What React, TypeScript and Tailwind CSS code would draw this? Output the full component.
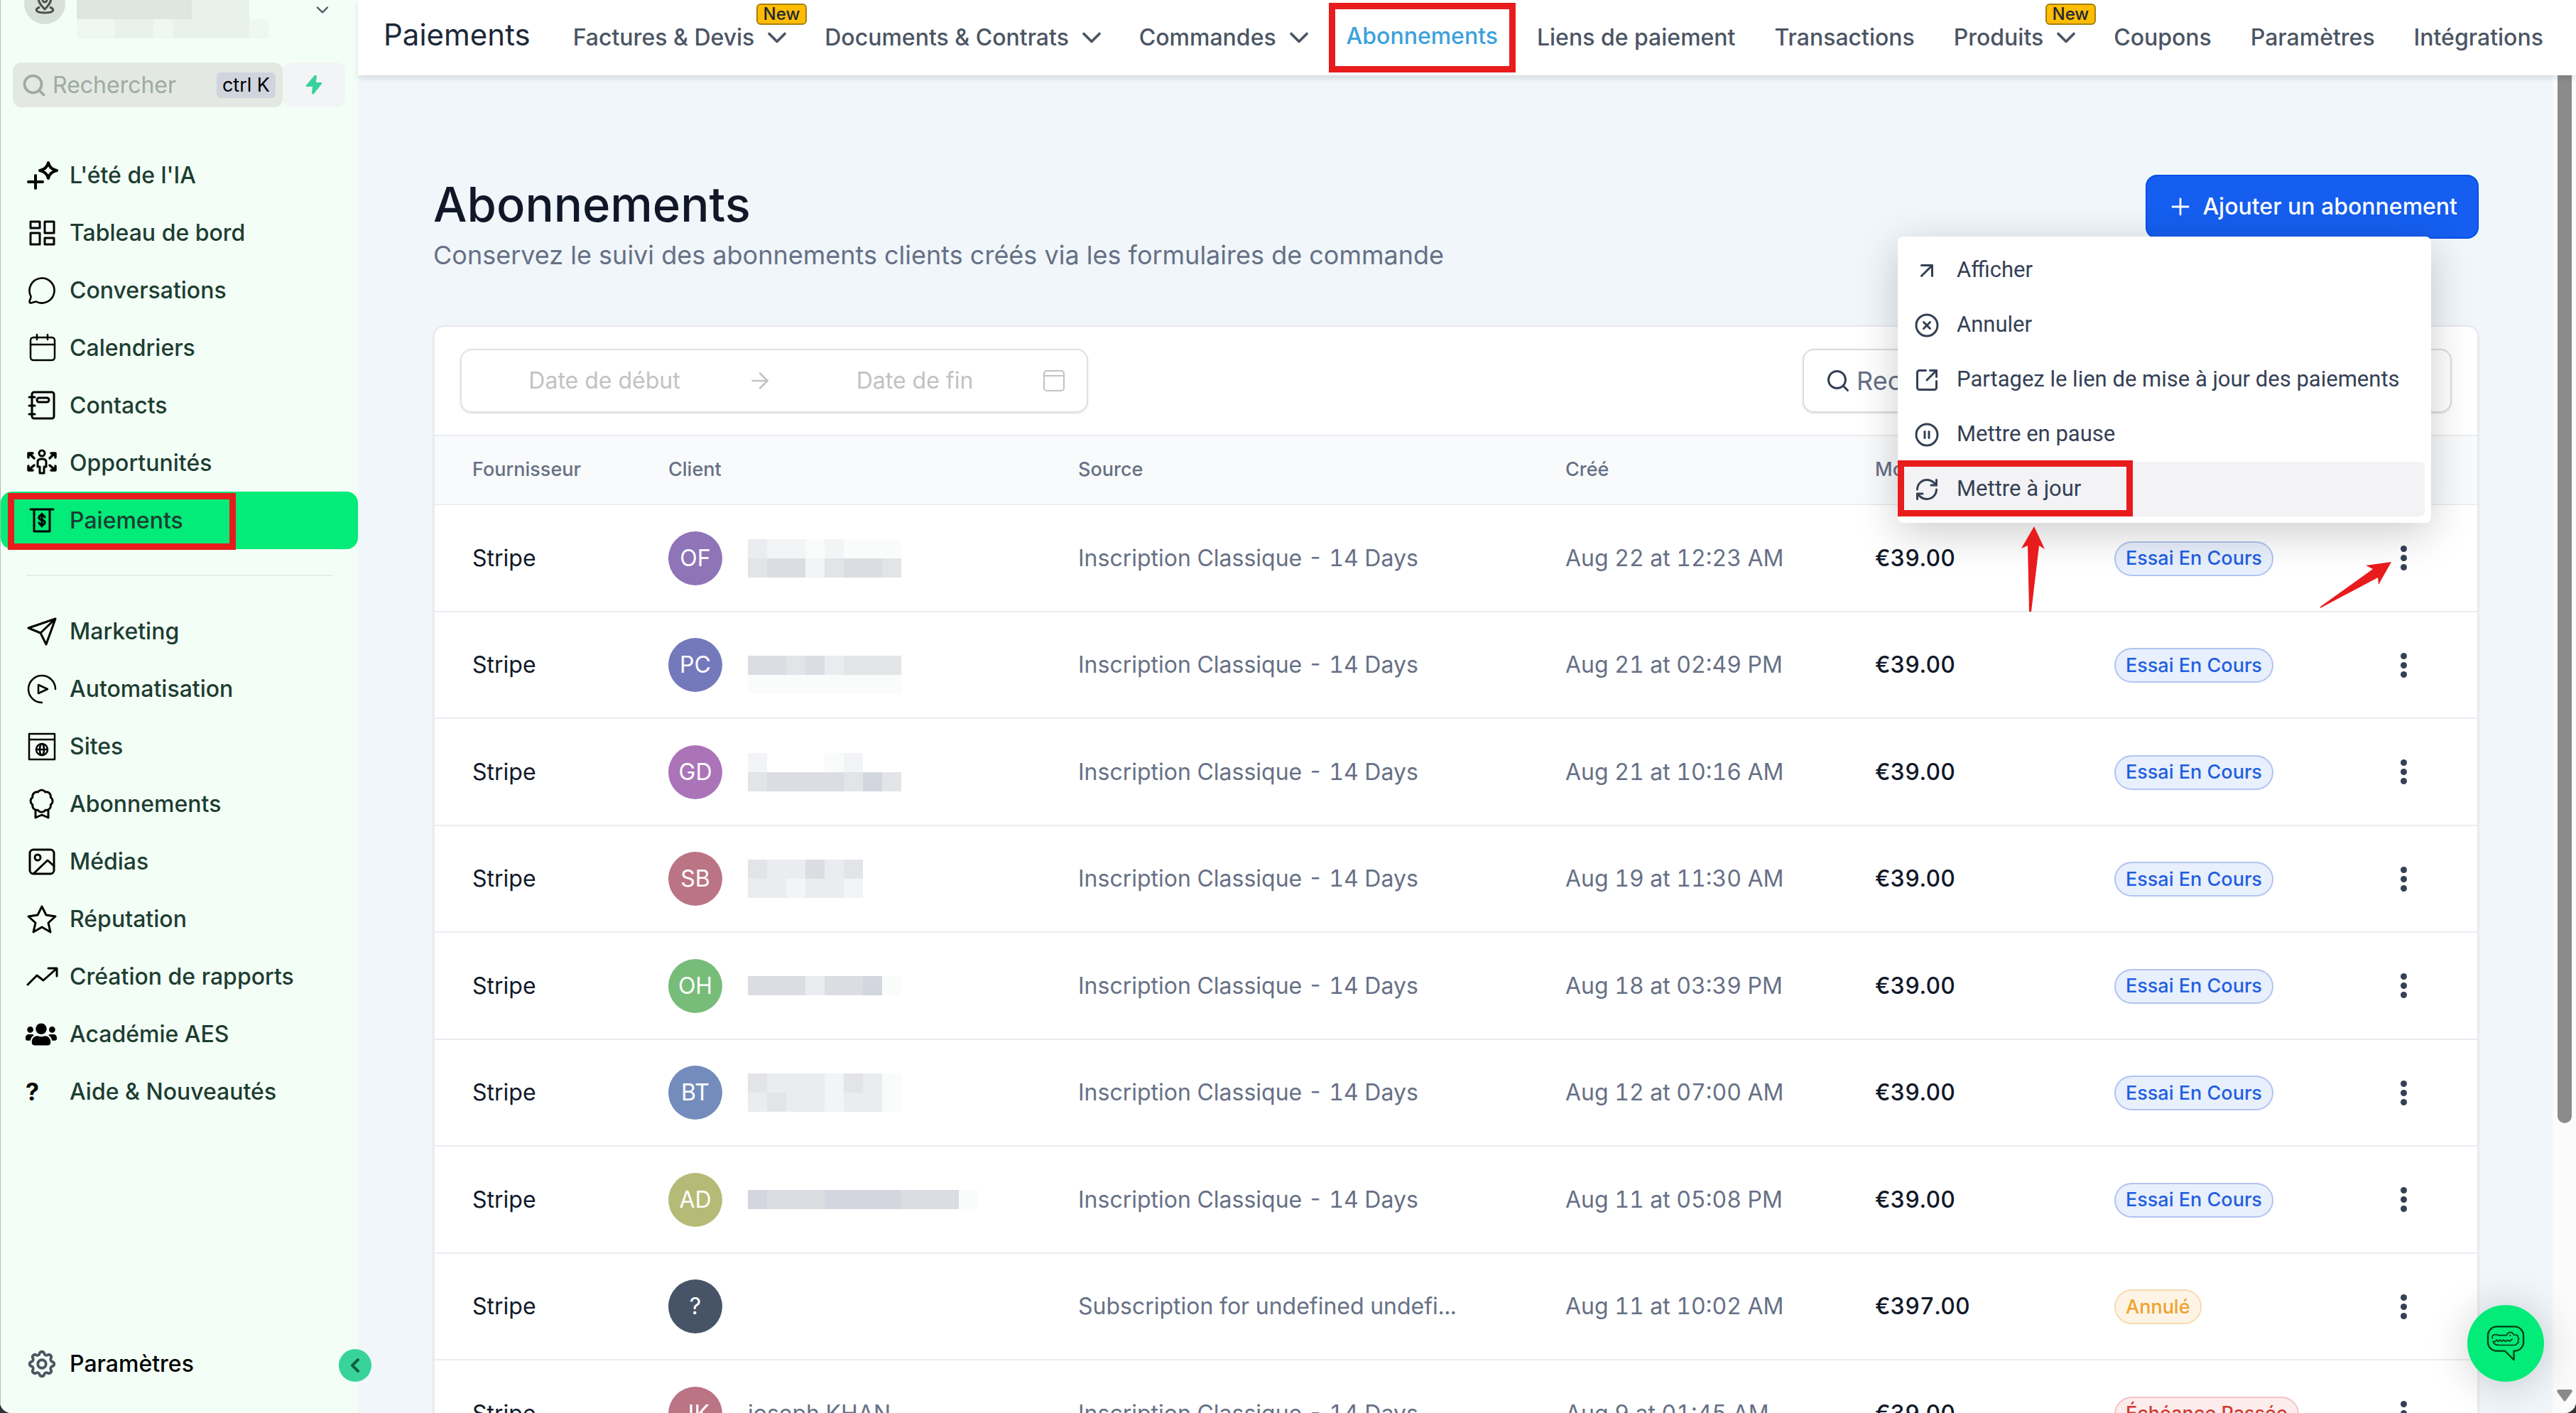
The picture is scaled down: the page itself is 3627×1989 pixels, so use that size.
import type { ReactNode } from 'react';
import {
  ArrowRight,
  ArrowUpRight,
  ChevronDown,
  ChevronLeft,
  CirclePause,
  CircleX,
  MessageCircle,
  Plus,
  RefreshCw,
  Search,
  SquareArrowOutUpRight,
} from 'lucide-react';
import { FaUsers } from 'react-icons/fa';
import { HiOutlineCog } from 'react-icons/hi';

/* ---------- sidebar icons ---------- */

const Glyph = ({ children, w = 3 }: { children: ReactNode; w?: number }) => (
  <svg
    viewBox="0 0 46 46"
    className="h-[46px] w-[46px]"
    fill="none"
    stroke="currentColor"
    strokeWidth={w}
    strokeLinejoin="round"
    strokeLinecap="round"
    aria-hidden="true"
  >
    {children}
  </svg>
);

const icons = {
  sparkle: (
    <Glyph w={4}>
      <path d="M4 32h20M14 23v18" />
      <path d="M32 5q2 9 12 11q-10 2-12 11q-2-9-12-11q10-2 12-11z" />
    </Glyph>
  ),
  dashboard: (
    <Glyph>
      <path d="M7 7h13v9H7zM27 7h13v16H27zM7 23h13v16H7zM27 30h13v9H27z" />
    </Glyph>
  ),
  bubble: <MessageCircle className="mx-[2px] h-[42px] w-[42px]" strokeWidth={1.5} />,
  calendar: (
    <Glyph w={2.5}>
      <rect x="7" y="8" width="34" height="32" rx="4" />
      <path d="M7 18h34M16 4v7M31 4v7" />
    </Glyph>
  ),
  contacts: (
    <Glyph>
      <rect x="9" y="4" width="31" height="37" rx="3" />
      <rect x="16" y="12" width="17" height="6" rx="3" />
      <path d="M5 11h8M5 23h8M5 35h8" />
    </Glyph>
  ),
  opportunities: (
    <Glyph>
      <circle cx="23" cy="9" r="4" />
      <path d="M17 28v-7q0-4 6-4t6 4v7h-3v9h-6v-9z" />
      <path d="M12 16L5 9M4 15V9h6M34 16l7-7M42 15V9h-6M12 26l-7 6M4 27v6h6M34 26l7 6M42 27v6h-6" strokeWidth={3.5} />
    </Glyph>
  ),
  payments: (
    <Glyph>
      <path d="M7 7h32M12 7v31h22V7" />
      <path d="M27 18q-1-3-4-3t-4 3t4 4t4 4t-4 3t-4-3M23 13v18" />
    </Glyph>
  ),
  send: (
    <Glyph>
      <path d="M4 18L42 5L29 41L21 25zM21 25L42 5" />
    </Glyph>
  ),
  play: (
    <Glyph w={2.5}>
      <path d="M42 23A19 19 0 1 0 23 42" />
      <path d="M18 17l13 6l-13 6z" />
    </Glyph>
  ),
  site: (
    <Glyph w={2.5}>
      <path d="M5 5h36v36H5zM5 13h36" />
      <circle cx="23" cy="27" r="8" />
      <ellipse cx="23" cy="27" rx="3" ry="8" />
      <path d="M15 27h16" />
    </Glyph>
  ),
  award: (
    <Glyph>
      <g transform="translate(4 0) scale(1.55)">
        <path
          strokeWidth={1.9}
          d="M3.85 8.62a4 4 0 0 1 4.78-4.77 4 4 0 0 1 6.74 0 4 4 0 0 1 4.78 4.78 4 4 0 0 1 0 6.74 4 4 0 0 1-4.77 4.78 4 4 0 0 1-6.75 0 4 4 0 0 1-4.78-4.77 4 4 0 0 1 0-6.76Z"
        />
      </g>
      <path d="M14 32v10l9-4l9 4V32" />
    </Glyph>
  ),
  media: (
    <Glyph>
      <rect x="6" y="6" width="34" height="34" rx="5" />
      <circle cx="17" cy="17" r="4" />
      <path d="M12 39l19-18l9 8" />
    </Glyph>
  ),
  star: (
    <Glyph>
      <path d="M23 5l6 12l13 2l-10 9l3 13l-12-7l-12 7l3-13l-10-9l13-2z" />
    </Glyph>
  ),
  trend: (
    <Glyph>
      <path d="M3 34l13-13l9 7L43 12M32 11h12v11" />
    </Glyph>
  ),
  users: <FaUsers className="h-11 w-11" />,
  help: <span className="text-[34px] leading-none font-bold">?</span>,
};

type IconName = keyof typeof icons;

const mainLinks: { icon: IconName; label: string }[] = [
  { icon: 'sparkle', label: "L'été de l'IA" },
  { icon: 'dashboard', label: 'Tableau de bord' },
  { icon: 'bubble', label: 'Conversations' },
  { icon: 'calendar', label: 'Calendriers' },
  { icon: 'contacts', label: 'Contacts' },
  { icon: 'opportunities', label: 'Opportunités' },
  { icon: 'payments', label: 'Paiements' },
];

const moreLinks: { icon: IconName; label: string }[] = [
  { icon: 'send', label: 'Marketing' },
  { icon: 'play', label: 'Automatisation' },
  { icon: 'site', label: 'Sites' },
  { icon: 'award', label: 'Abonnements' },
  { icon: 'media', label: 'Médias' },
  { icon: 'star', label: 'Réputation' },
  { icon: 'trend', label: 'Création de rapports' },
  { icon: 'users', label: 'Académie AES' },
  { icon: 'help', label: 'Aide & Nouveautés' },
];

const topLinks: { label: string; menu?: boolean; isNew?: boolean; active?: boolean }[] = [
  { label: 'Factures & Devis', menu: true, isNew: true },
  { label: 'Documents & Contrats', menu: true },
  { label: 'Commandes', menu: true },
  { label: 'Abonnements', active: true },
  { label: 'Liens de paiement' },
  { label: 'Transactions' },
  { label: 'Produits', menu: true, isNew: true },
  { label: 'Coupons' },
  { label: 'Paramètres' },
  { label: 'Intégrations' },
];

/* ---------- table data ---------- */

type Status = 'trial' | 'canceled' | 'pastDue';

interface Row {
  initials: string;
  color: string;
  name?: string;
  tiles?: string[];
  source?: string;
  date: string;
  amount?: string;
  status?: Status;
}

// Masked names: one string per line of tiles, one shade letter per tile
const shades: Record<string, string> = {
  ' ': 'transparent',
  a: '#fafbfb',
  b: '#f3f4f6',
  c: '#ebecef',
  d: '#e3e4e8',
  e: '#dbdde2',
  f: '#d3d6df',
};

const rows: Row[] = [
  { initials: 'OF', color: '#8f74b8', tiles: ['cbbabaaa', 'deebdeed'], date: 'Aug 22 at 12:23 AM' },
  { initials: 'PC', color: '#7479bc', tiles: ['        ', 'eedecddd', 'aaaaaaaa'], date: 'Aug 21 at 02:49 PM' },
  { initials: 'GD', color: '#ab74b9', tiles: ['b   ab  ', 'deeeedfd'], date: 'Aug 21 at 10:16 AM' },
  { initials: 'SB', color: '#bb7484', tiles: ['dccecd  ', 'ccbccb  '], date: 'Aug 19 at 11:30 AM' },
  { initials: 'OH', color: '#77bc79', tiles: ['eeeceefa'], date: 'Aug 18 at 03:39 PM' },
  { initials: 'BT', color: '#748cbb', tiles: ['dcccbdca', 'cdccbcca'], date: 'Aug 12 at 07:00 AM' },
  { initials: 'AD', color: '#b5bb77', tiles: ['feeeffffeeea'], date: 'Aug 11 at 05:08 PM' },
  {
    initials: '?',
    color: '#475467',
    source: 'Subscription for undefined undefi...',
    date: 'Aug 11 at 10:02 AM',
    amount: '€397.00',
    status: 'canceled',
  },
  { initials: 'JK', color: '#bb7484', name: 'joseph KHAN', date: 'Aug 9 at 01:45 AM', status: 'pastDue' },
];

const statusLabel: Record<Status, string> = {
  trial: 'Essai En Cours',
  canceled: 'Annulé',
  pastDue: 'Échéance Passée',
};

const statusClass: Record<Status, string> = {
  trial: 'border-[#b2c4f0] bg-[#e8effd] text-[#1f5fe0]',
  canceled: 'border-[#f7dab0] bg-[#fef4e6] text-[#eda32f]',
  pastDue: 'border-[#f3c3c3] bg-[#fdecec] text-[#d03a30]',
};

const menuItems = [
  { Icon: ArrowUpRight, label: 'Afficher' },
  { Icon: CircleX, label: 'Annuler' },
  { Icon: SquareArrowOutUpRight, label: 'Partagez le lien de mise à jour des paiements' },
  { Icon: CirclePause, label: 'Mettre en pause' },
  { Icon: RefreshCw, label: 'Mettre à jour' },
];

const Tiles = ({ lines, palette }: { lines: string[]; palette: Record<string, string> }) => (
  <div aria-hidden="true">
    {lines.map((line, i) => (
      <div key={i} className="flex">
        {line.split('').map((s, j) => (
          <span key={j} className="h-[27px] w-[27px]" style={{ backgroundColor: palette[s] }} />
        ))}
      </div>
    ))}
  </div>
);

const NavItem = ({ icon, label, active }: { icon: IconName; label: string; active?: boolean }) => (
  <li className="relative">
    <a
      href="#"
      className={`flex h-[81px] items-center gap-4 pl-[35px] text-[32px] font-medium text-[#1d3d32] ${
        active ? 'rounded-2xl bg-[#03eb79]' : ''
      }`}
    >
      <span className="flex w-[46px] text-black">{icons[icon]}</span>
      {label}
    </a>
    {active && (
      <span className="pointer-events-none absolute top-[2px] left-[10px] h-[80px] w-[321px] border-9 border-[#e81c1c]" />
    )}
  </li>
);

const sideShades = { ' ': 'transparent', a: '#eef7f1', b: '#e8f1eb', c: '#dde6e0' };

const Sidebar = () => (
  <aside className="relative flex w-[504px] shrink-0 flex-col border-l border-[#b5bdb8] bg-[#f3fff6]">
    <div className="flex h-[88px] items-start">
      <div className="-mt-6 ml-[33px] flex h-[58px] w-[58px] items-end justify-center rounded-full bg-[#d8e0da] pb-[14px]">
        <svg viewBox="0 0 28 36" className="h-9 w-7" fill="none" stroke="#4a534e" strokeWidth="3" aria-hidden="true">
          <path d="M14 29C8 23 5 19 5 13a9 9 0 0 1 18 0c0 6-3 10-9 16z" />
          <circle cx="14" cy="16" r="3" />
          <path d="M7 26c-8 3-6 8 7 8s15-5 7-8" />
        </svg>
      </div>
      <div className="ml-4">
        <Tiles lines={['ccccccbbb', 'aabbabbbba']} palette={sideShades} />
      </div>
      <button type="button" aria-label="Changer de compte" className="mr-9 ml-auto">
        <ChevronDown className="h-7 w-7 text-[#4b5563]" />
      </button>
    </div>

    <div className="flex pl-[17px]">
      <label className="flex h-[63px] w-[380px] items-center rounded-xl bg-[#e3e8e3] pr-[10px] pl-3">
        <Search className="h-9 w-9 text-[#9daaa3]" strokeWidth={2.5} />
        <input
          type="search"
          aria-label="Rechercher"
          placeholder="Rechercher"
          className="ml-2 w-0 flex-1 text-[32px] outline-none placeholder:text-[#9daaa3]"
        />
        <kbd className="rounded-md bg-[#d0d4dc] px-2 font-['Inter',sans-serif] text-[27px] leading-9 text-black">
          ctrl K
        </kbd>
      </label>
      <button
        type="button"
        aria-label="Actions rapides"
        className="flex h-[63px] w-[88px] items-center justify-center rounded-xl bg-[#f3f4f6]"
      >
        <svg viewBox="0 0 24 27" className="h-[27px] w-6" fill="#37d39b" aria-hidden="true">
          <path d="M13 0L1 14q-1 2 1 2h8l-1 9q1 3 3 1L23 12q1-2-1-2h-7l1-9q-1-2-3-1z" />
        </svg>
      </button>
    </div>

    <nav className="mt-[55px]">
      <ul>
        {mainLinks.map(l => (
          <NavItem key={l.label} {...l} active={l.label === 'Paiements'} />
        ))}
      </ul>
      <hr className="mx-9 mt-9 mb-[37px] border-t-2 border-[#e3ece9]" />
      <ul>
        {moreLinks.map(l => (
          <NavItem key={l.label} {...l} />
        ))}
      </ul>
    </nav>

    <a
      href="#"
      className="mt-auto mb-[29px] flex h-[81px] items-center gap-4 pl-[35px] text-[32px] font-medium text-black"
    >
      <HiOutlineCog className="h-[46px] w-[46px] text-[#4b5563]" />
      Paramètres
    </a>

    <button
      type="button"
      aria-label="Réduire le menu"
      className="absolute right-[-19px] bottom-[44px] z-10 flex h-[46px] w-[46px] items-center justify-center rounded-full bg-[#37d39b]"
    >
      <ChevronLeft className="h-8 w-8 text-[#115e45]" strokeWidth={3} />
    </button>
  </aside>
);

const TopBar = () => (
  <header className="relative z-10 flex h-[106px] items-start bg-white pr-[46px] pl-9 shadow-[0_4px_8px_rgba(16,24,40,0.12)]">
    <p className="mr-[60px] text-[42px] leading-[98px] text-[#1d2939]">Paiements</p>
    <nav className="flex-1">
      <ul className="flex justify-between text-[32px] leading-[106px] font-medium text-[#4b5563]">
        {topLinks.map(l => (
          <li key={l.label} className="relative">
            <a href="#" className={`flex items-center ${l.active ? 'leading-[102px] text-[#3ba1dc]' : ''}`}>
              {l.label}
              {l.menu && <ChevronDown className="mr-[-10px] ml-[10px] h-[44px] w-[44px]" />}
            </a>
            {l.isNew && (
              <span className="absolute top-[5px] right-[-30px] flex h-[30px] items-center rounded-md border-2 border-[#a68010] bg-[#ffbc00] px-2 text-[24px] leading-none text-[#1d2939]">
                New
              </span>
            )}
            {l.active && (
              <span className="pointer-events-none absolute -inset-x-[25px] top-1 h-[98px] border-9 border-[#e81c1c]" />
            )}
          </li>
        ))}
      </ul>
    </nav>
  </header>
);

const DateRange = () => (
  <div className="flex h-[90px] w-[884px] items-center rounded-2xl border-2 border-[#e0e0e6] pr-[30px] shadow-sm">
    <input
      aria-label="Date de début"
      placeholder="Date de début"
      className="w-[402px] text-center text-[32px] outline-none placeholder:text-[#c2c2c2]"
    />
    <ArrowRight className="h-9 w-9 text-[#c2c2c2]" strokeWidth={1.75} />
    <input
      aria-label="Date de fin"
      placeholder="Date de fin"
      className="w-0 flex-1 pl-5 text-center text-[32px] outline-none placeholder:text-[#c2c2c2]"
    />
    <svg viewBox="0 0 32 32" className="h-8 w-8" fill="none" stroke="#c2c2c2" strokeWidth="2" aria-hidden="true">
      <rect x="2" y="2" width="28" height="28" rx="4" />
      <path d="M2 9h28" />
    </svg>
  </div>
);

const SubscriptionTable = () => (
  <table className="w-full table-fixed border-separate border-spacing-0 text-left text-[32px] tabular-nums">
    <colgroup>
      <col className="w-[276px]" />
      <col className="w-[577px]" />
      <col className="w-[686px]" />
      <col className="w-[436px]" />
      <col className="w-[337px]" />
      <col className="w-[407px]" />
      <col />
    </colgroup>
    <thead>
      <tr className="h-[97px] bg-[#f9fafb] text-[27px] text-[#667085] [&>th]:border-b-2 [&>th]:border-[#eaecf0] [&>th]:pl-[53px] [&>th]:font-medium">
        <th scope="col">Fournisseur</th>
        <th scope="col">Client</th>
        <th scope="col">Source</th>
        <th scope="col">Créé</th>
        <th scope="col">Montant</th>
        <th scope="col">Statut</th>
        <th scope="col" aria-label="Actions" />
      </tr>
    </thead>
    <tbody>
      {rows.map((r, i) => {
        const status = r.status ?? 'trial';
        return (
          <tr
            key={i}
            className="h-[151px] text-[#667085] even:h-[150px] [&>td]:border-b-2 [&>td]:border-[#eaecf0] [&>td]:p-0 [&>td]:pl-[53px]"
          >
            <td className="text-[#101828]">Stripe</td>
            <td>
              <div className="flex items-center gap-9">
                <span
                  className="flex h-[76px] w-[76px] items-center justify-center rounded-full text-white"
                  style={{ backgroundColor: r.color }}
                >
                  {r.initials}
                </span>
                {r.tiles && <Tiles lines={r.tiles} palette={shades} />}
                {r.name}
              </div>
            </td>
            <td className="whitespace-nowrap">{r.source ?? 'Inscription Classique - 14 Days'}</td>
            <td>{r.date}</td>
            <td className="font-medium text-[#101828]">{r.amount ?? '€39.00'}</td>
            <td>
              <span
                className={`inline-flex h-[49px] items-center rounded-full border-2 px-[14px] align-middle text-[27px] font-medium ${statusClass[status]}`}
              >
                {statusLabel[status]}
              </span>
            </td>
            <td>
              <div className="relative -ml-[27px] h-[54px] w-[54px]">
                <button
                  type="button"
                  aria-label="Plus d'actions"
                  className="flex h-full w-full flex-col items-center justify-center gap-1 text-[#344054]"
                >
                  <span className="h-[9px] w-[9px] rounded-full bg-current" />
                  <span className="h-[9px] w-[9px] rounded-full bg-current" />
                  <span className="h-[9px] w-[9px] rounded-full bg-current" />
                </button>
                {i === 0 && (
                  <svg viewBox="0 0 100 65" className="absolute top-8 -left-[90px] h-[65px] w-[100px]" fill="#e81c1c" aria-hidden="true">
                    <path d="M100 0L64 5l10 5L0 63v2L81 22l1 10z" />
                  </svg>
                )}
              </div>
            </td>
          </tr>
        );
      })}
    </tbody>
  </table>
);

const RowMenu = () => (
  <div
    role="menu"
    className="absolute top-[333px] right-[204px] z-20 flex min-w-[751px] flex-col rounded-lg bg-white py-[9px] font-['Roboto',sans-serif] text-[31px] text-[#344054] shadow-[0_14px_60px_rgba(0,0,0,0.2)]"
  >
    {menuItems.map(({ Icon, label }, i) => (
      <button
        key={label}
        type="button"
        role="menuitem"
        className={`relative mx-[9px] flex h-[77px] items-center gap-6 rounded-md pr-7 pl-[14px] text-left whitespace-nowrap ${
          i === menuItems.length - 1 ? 'bg-[#f3f3f5]' : ''
        }`}
      >
        <Icon className="h-9 w-9" />
        {label}
        {i === menuItems.length - 1 && (
          <span className="pointer-events-none absolute top-[-2px] -left-[9px] h-[79px] w-[331px] border-9 border-[#e81c1c]" />
        )}
      </button>
    ))}
    <svg viewBox="0 0 34 120" className="absolute top-[408px] left-[174px] h-[120px] w-[34px]" fill="#e81c1c" aria-hidden="true">
      <path d="M18 0L0 31l9-4l2 93h3L25 27l8 5z" />
    </svg>
  </div>
);

export default function App() {
  return (
    <div className="bg-[#2f3234]">
      <div className="flex h-screen overflow-hidden rounded-b-2xl bg-[#f0f6fa] font-['Inter',sans-serif]">
        <Sidebar />
        <div className="relative flex min-w-0 flex-1 flex-col">
          <TopBar />
          <div className="flex min-h-0 flex-1">
            <main className="min-w-0 flex-1 overflow-hidden pt-[140px] pr-[104px] pl-[106px]">
              <div className="flex items-start justify-between">
                <div>
                  <h1 className="text-[67px] leading-[84px] font-medium text-[#101828]">Abonnements</h1>
                  <p className="text-[36px] leading-[58px] text-[#667085]">
                    Conservez le suivi des abonnements clients créés via les formulaires de commande
                  </p>
                </div>
                <button
                  type="button"
                  className="flex h-[90px] items-center gap-3 rounded-2xl border-2 border-[#004eeb] bg-[#155eef] px-7 text-[32px] font-medium text-white"
                >
                  <Plus className="h-[38px] w-[38px]" strokeWidth={1.75} />
                  Ajouter un abonnement
                </button>
              </div>

              <section className="mt-[70px] rounded-2xl border-2 border-[#e8ebf0] bg-white shadow-sm">
                <div className="flex items-center justify-between border-b-2 border-[#eaecf0] px-9 py-[31px]">
                  <DateRange />
                  <label className="flex h-[90px] w-[914px] items-center gap-2 rounded-2xl border-2 border-[#d9dce3] px-[30px] shadow-sm">
                    <Search className="h-9 w-9 text-[#344054]" />
                    <input
                      type="search"
                      aria-label="Rechercher un abonnement"
                      placeholder="Rechercher"
                      className="w-0 flex-1 text-[36px] outline-none placeholder:text-[#667085]"
                    />
                  </label>
                </div>
                <SubscriptionTable />
              </section>
            </main>

            {/* scroll bar */}
            <div className="flex w-[33px] shrink-0 flex-col items-center justify-between bg-[#fbfbfb] pb-4" aria-hidden="true">
              <div className="h-[79%] w-5 rounded-b-full bg-[#8b8b8b]" />
              <svg viewBox="0 0 22 17" className="h-[17px] w-[22px]" fill="#8b8b8b">
                <path d="M2 0h18q3 1 1 4l-8 11q-2 3-4 0L1 4q-2-3 1-4z" />
              </svg>
            </div>
          </div>

          <RowMenu />

          <button
            type="button"
            aria-label="Ouvrir le chat"
            className="absolute right-[45px] bottom-[44px] z-20 flex h-[108px] w-[108px] items-center justify-center rounded-full bg-[#03eb79] shadow-[0_4px_60px_rgba(0,0,0,0.2)]"
          >
            <svg
              viewBox="243 199 164 157"
              className="h-[52px] w-[54px]"
              fill="none"
              stroke="#053d12"
              strokeWidth="7"
              strokeLinejoin="round"
              aria-hidden="true"
            >
              <path d="M287 206h76a38 38 0 0 1 38 38v28a38 38 0 0 1-38 38h-3v38l-38-38h-35a38 38 0 0 1-38-38v-28a38 38 0 0 1 38-38z" />
              <path
                strokeWidth="5"
                d="M268 258q-4-17 12-18q9-1 13 3h36q4-13 16-13q11 0 14 11h10q9 1 8 10l5 7-5 7 3 8-8 6q-2 6-9 6h-66q-22 0-26-16l10 1 5-8 8 8 6-8 9 8 6-8 9 8 7-6 12 4q8-9 12-10"
              />
              <circle cx="344" cy="243" r="3" strokeWidth="3" />
            </svg>
          </button>
        </div>
      </div>
    </div>
  );
}
